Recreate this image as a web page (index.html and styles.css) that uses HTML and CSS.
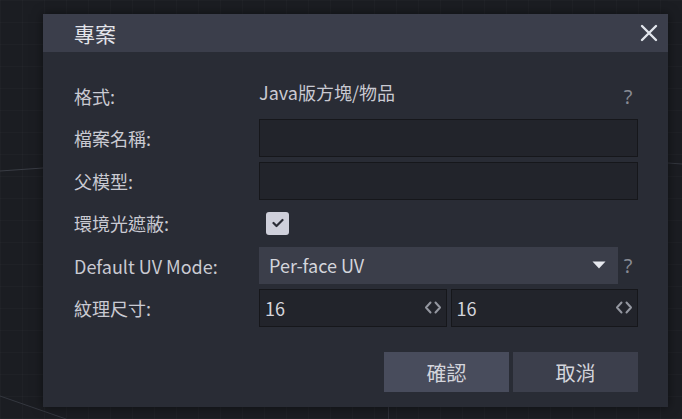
FILE: index.html
```html
<!DOCTYPE html>
<html lang="zh-Hant">
<head>
<meta charset="utf-8">
<link rel="stylesheet" href="styles.css">
</head>
<body>
<div class="canvas">
  <svg class="scene" width="682" height="419" viewBox="0 0 682 419">
    <line x1="0" y1="171" x2="43" y2="168" stroke="#3a3d45" stroke-width="1"/>
    <line x1="668" y1="163" x2="682" y2="164" stroke="#33363e" stroke-width="1"/>
    <line x1="0" y1="396" x2="66" y2="419" stroke="#34373f" stroke-width="1"/>
    <line x1="388.5" y1="407" x2="388.5" y2="419" stroke="#2e3038" stroke-width="1"/>
  </svg>

  <div class="dialog">
    <div class="dialog-header">
      <span class="dialog-title">專案</span>
      <svg class="close" width="18" height="18" viewBox="0 0 18 18">
        <path d="M2 2 L16 16 M16 2 L2 16" stroke="#e2e5ec" stroke-width="2.4" stroke-linecap="round" fill="none"/>
      </svg>
    </div>
    <div class="dialog-body">
      <div class="form">
        <label class="lbl">格式:</label>
        <div class="field with-help">
          <span class="value">Java版方塊/物品</span>
          <span class="help">?</span>
        </div>

        <label class="lbl">檔案名稱:</label>
        <div class="field"><div class="input"></div></div>

        <label class="lbl">父模型:</label>
        <div class="field"><div class="input"></div></div>

        <label class="lbl">環境光遮蔽:</label>
        <div class="field">
          <span class="checkbox">
            <svg width="12" height="10" viewBox="0 0 12 10"><path d="M1.5 5 L4.5 8 L10.5 2" stroke="#2a2c35" stroke-width="2.2" fill="none" stroke-linecap="round" stroke-linejoin="round"/></svg>
          </span>
        </div>

        <label class="lbl">Default UV Mode:</label>
        <div class="field with-help">
          <div class="select">
            <span>Per-face UV</span>
            <svg class="caret" width="14" height="8" viewBox="0 0 14 8"><path d="M0.5 0.5 H13.5 L7 7.5 Z" fill="#e6e8ee"/></svg>
          </div>
          <span class="help">?</span>
        </div>

        <label class="lbl">紋理尺寸:</label>
        <div class="field pair">
          <div class="num">
            <span>16</span>
            <svg class="arrows" width="18" height="13" viewBox="0 0 18 13"><path d="M6.5 1.5 L2 6.5 L6.5 11.5 M11.5 1.5 L16 6.5 L11.5 11.5" stroke="#9497a0" stroke-width="2" fill="none" stroke-linecap="round" stroke-linejoin="round"/></svg>
          </div>
          <div class="num">
            <span>16</span>
            <svg class="arrows" width="18" height="13" viewBox="0 0 18 13"><path d="M6.5 1.5 L2 6.5 L6.5 11.5 M11.5 1.5 L16 6.5 L11.5 11.5" stroke="#9497a0" stroke-width="2" fill="none" stroke-linecap="round" stroke-linejoin="round"/></svg>
          </div>
        </div>
      </div>
      <div class="buttons">
        <button class="btn confirm">確認</button>
        <button class="btn">取消</button>
      </div>
    </div>
  </div>
</div>
</body>
</html>
```

FILE: styles.css
```css
* { box-sizing: border-box; }
html, body {
  margin: 0;
  padding: 0;
  width: 682px;
  height: 419px;
  overflow: hidden;
  background: #1b1d22;
  font-family: "Noto Sans CJK TC", "Noto Sans", sans-serif;
}
.canvas {
  position: relative;
  width: 682px;
  height: 419px;
  background-color: #1b1d22;
  background-image:
    linear-gradient(to right, rgba(255,255,255,0.018) 1px, transparent 1px),
    linear-gradient(to bottom, rgba(255,255,255,0.018) 1px, transparent 1px);
  background-size: 22px 22px;
}
.scene {
  position: absolute;
  left: 0;
  top: 0;
}
.dialog {
  position: absolute;
  left: 43px;
  top: 14px;
  width: 625px;
  height: 393px;
  background: #292c35;
  box-shadow: 0 0 10px rgba(0,0,0,0.5);
  display: flex;
  flex-direction: column;
}
.dialog-header {
  height: 38px;
  background: #3b3e4b;
  display: flex;
  align-items: center;
  justify-content: space-between;
  padding: 0 10px 0 31px;
}
.dialog-title {
  color: #e3e4ea;
  font-size: 21px;
  line-height: 1;
}
.close { display: block; }
.dialog-body {
  padding: 25px 30px 15px 31px;
  display: flex;
  flex-direction: column;
  flex: 1;
}
.form {
  display: grid;
  grid-template-columns: 185px 379px;
  grid-auto-rows: 38px;
  row-gap: 4.4px;
}
.lbl {
  color: #c9cad2;
  font-size: 18px;
  display: flex;
  align-items: center;
}
.field {
  display: flex;
  align-items: center;
}
.value {
  color: #c9cad2;
  font-size: 18px;
  flex: 1;
  margin-bottom: 8px;
}
.help {
  width: 20px;
  text-align: center;
  color: #878a94;
  font-size: 20px;
  font-family: "Noto Sans", sans-serif;
}
.with-help .help { margin-left: auto; }
.input {
  width: 100%;
  height: 100%;
  background: #22242b;
  border: 1px solid #16171b;
}
.checkbox {
  width: 23px;
  height: 23px;
  margin-left: 7px;
  border-radius: 3px;
  background: #cfd0db;
  display: flex;
  align-items: center;
  justify-content: center;
}
.select {
  width: 359px;
  height: 37px;
  align-self: flex-start;
  background: #3b3e4a;
  display: flex;
  align-items: center;
  justify-content: space-between;
  padding: 0 12px 0 10px;
  color: #d4d5dc;
  font-size: 18px;
}
.pair { gap: 4px; }
.num {
  flex: 1;
  height: 100%;
  background: #22242b;
  border: 1px solid #16171b;
  display: flex;
  align-items: center;
  justify-content: space-between;
  padding: 0 4px 0 5px;
  color: #d4d5dc;
  font-size: 18px;
}
.buttons {
  margin-top: auto;
  display: flex;
  justify-content: flex-end;
  gap: 4px;
}
.btn {
  width: 125px;
  height: 40px;
  border: none;
  background: #3c3f4c;
  color: #d4d5dc;
  font-family: "Noto Sans CJK TC", sans-serif;
  font-size: 20px;
  padding: 0;
}
.btn.confirm { background: #484c5c; }
```
